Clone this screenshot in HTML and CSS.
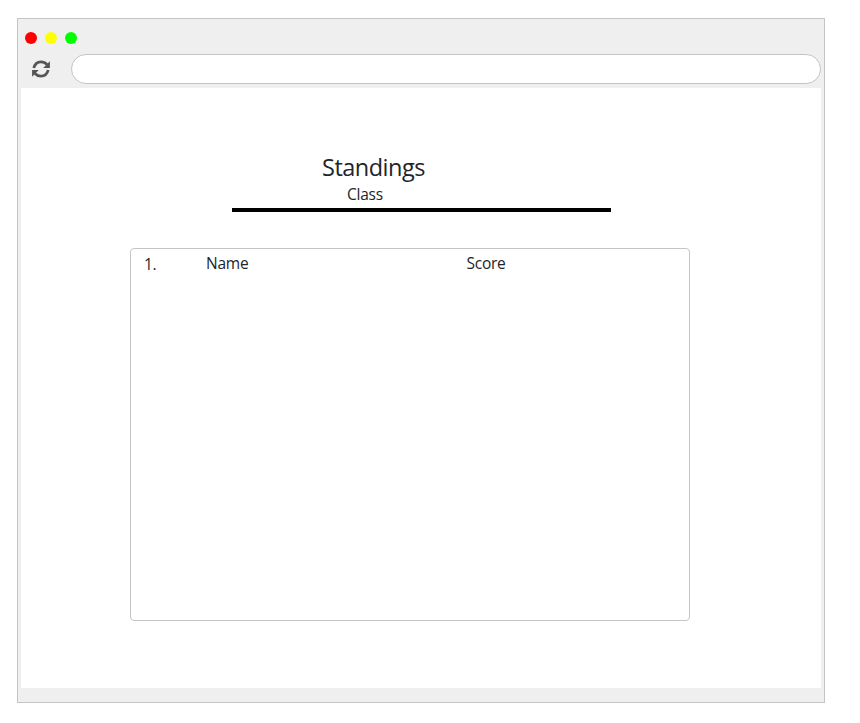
FILE: index.html
```html
<!DOCTYPE html>
<html lang="en">
<head>
<meta charset="utf-8">
<title>Standings</title>
<link rel="stylesheet" href="styles.css">
</head>
<body>
<div class="window">
  <div class="controls"><span class="dot red"></span><span class="dot yellow"></span><span class="dot green"></span></div>
  <div class="toolbar">
    <svg class="refresh" viewBox="0 0 18 18"><path class="arc" d="M1.800 8C2.800 4 5.600 1.800 9 1.800Q12.500 1.800 15 4.500M16.200 10C15.200 14 12.400 16.200 9 16.200Q5.500 16.200 3 13.500"/><path d="M17.900 1.200V8H11.200L13.500 5.700L15.600 3.400ZM.1 16.800V10H6.800L4.500 12.300L2.400 14.600Z"/></svg>
    <div class="address"></div>
  </div>
  <main class="page">
    <header class="heading">
      <h1><span>Standings</span></h1>
      <p><span>Class</span></p>
    </header>
    <section class="table">
      <div class="row"><span class="rank">1.</span><span class="name">Name</span><span class="score">Score</span></div>
    </section>
  </main>
</div>
</body>
</html>
```
FILE: styles.css
```css
* { box-sizing: border-box; }
body { margin: 0; background: #fff; font-family: "Open Sans", "Noto Sans", sans-serif; color: #212529; }
.window { width: 808px; height: 685px; margin: 18px 0 0 17px; padding: 13px 3px 0; border: 1px solid #c4c4c4; background: #efefef; }
.controls { display: flex; gap: 8px; padding-left: 4px; height: 22px; }
.dot { width: 12px; height: 12px; border-radius: 50%; }
.red { background: #f00; }
.yellow { background: #ff0; }
.green { background: #0f0; }
.toolbar { display: flex; height: 34px; padding-left: 11px; }
.refresh { width: 18px; height: 18px; margin: 6px 21px 0 0; fill: #555; }
.arc { fill: none; stroke: #555; stroke-width: 2.8; }
.address { flex: 1; height: 30px; border: 1px solid #c4c4c4; border-radius: 15px; background: #fff; }
.page { height: 600px; padding: 64px 131px 0 109px; background: #fff; }
.heading { width: 379px; height: 60px; margin-left: 102px; border-bottom: 4px solid #000; }
h1, p { margin: 0; font-weight: 400; }
h1 { height: 31px; padding-left: 90px; font-size: 23.5px; line-height: 31px; letter-spacing: -0.5px; }
p { height: 24px; padding-left: 115px; font-size: 15.5px; line-height: 22px; letter-spacing: -0.25px; }
.table { height: 373px; margin-top: 36px; padding: 2px 0 0 13px; border: 1px solid #c4c4c4; border-radius: 4px; }
.row { display: grid; grid-template-columns: 62px 260.5px 1fr; font-size: 15.5px; line-height: 24px; letter-spacing: -0.25px; }
.rank { padding-top: 1px; }
```
